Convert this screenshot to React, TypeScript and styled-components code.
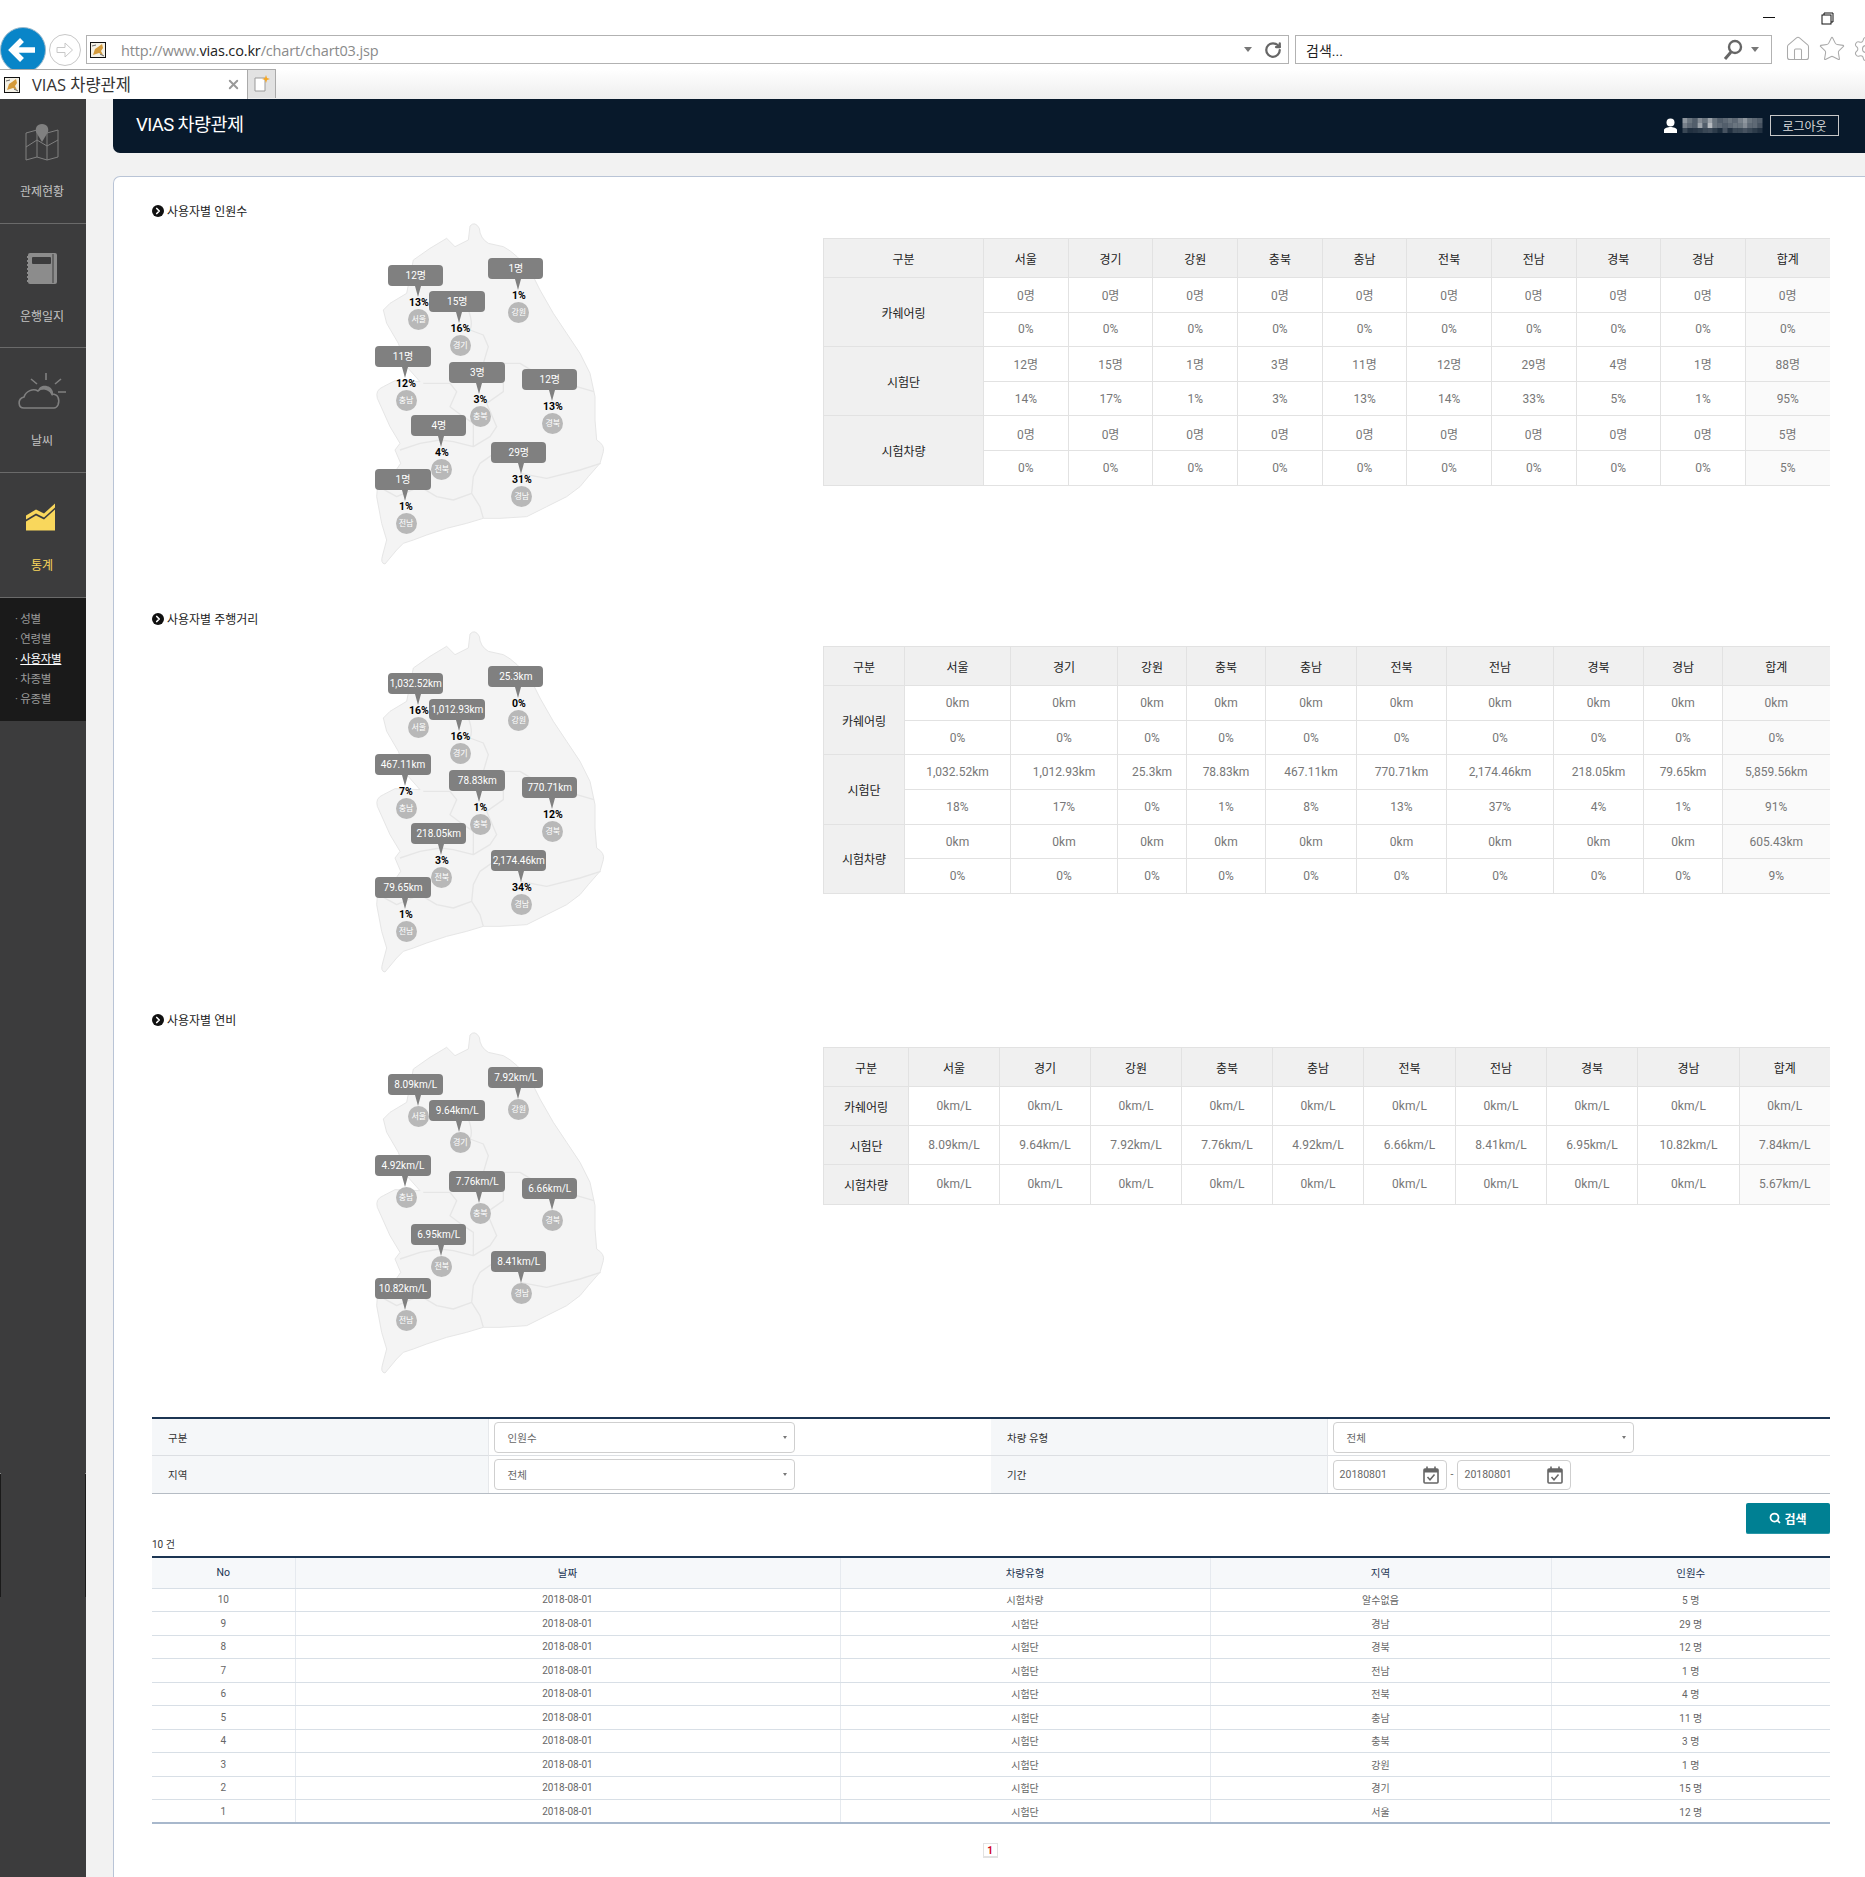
import React from "react";
import styled, { createGlobalStyle } from "styled-components";
import { ChevronRight, Home, RotateCw, Search, Settings, Star, X } from "lucide-react";

const FONT = `Roboto, "Noto Sans CJK KR", sans-serif`;

const GlobalStyle = createGlobalStyle`
  html, body { margin: 0; padding: 0; background: #fff; }
  body { font-family: ${FONT}; font-size: 12px; color: #222; overflow: hidden; }
  * { box-sizing: border-box; }
`;

const Page = styled.div`
  width: 1865px;
  height: 1877px;
  overflow: hidden;
  display: flex;
  flex-direction: column;
`;

/* ---------- browser chrome ---------- */
const TitleBar = styled.div`
  height: 35px;
  display: flex;
  justify-content: flex-end;
  align-items: flex-start;
  background: #fff;
`;
const Minimize = styled.div`
  width: 12px;
  height: 1px;
  background: #111;
  margin: 17px 46px 0 0;
`;
const Restore = styled.svg`
  width: 13px;
  height: 13px;
  margin: 12px 31px 0 0;
`;
const NavBar = styled.div`
  height: 34px;
  display: flex;
  align-items: flex-start;
  background: #fff;
`;
const BackButton = styled.div`
  width: 46px;
  height: 46px;
  margin-top: -8px;
  border-radius: 50%;
  background: #0985c8;
  border: 1px solid #9bb9cc;
  display: flex;
  align-items: center;
  justify-content: center;
  flex: none;
`;
const ForwardButton = styled.div`
  width: 32px;
  height: 32px;
  margin: -1px 5px 0 3px;
  border-radius: 50%;
  border: 1px solid #c8c8c8;
  display: flex;
  align-items: center;
  justify-content: center;
  flex: none;
`;
const AddressBox = styled.div<{ $w: number }>`
  width: ${(p) => p.$w}px;
  height: 29px;
  border: 1px solid #b2b2b2;
  display: flex;
  align-items: center;
  flex: none;
  margin-right: 6px;
  background: #fff;
`;
const Favicon = styled.svg<{ $left: number }>`
  width: 16px;
  height: 16px;
  margin-left: ${(p) => p.$left}px;
  flex: none;
`;
const UrlText = styled.div`
  margin-left: 15px;
  padding-top: 1px;
  font-family: "Open Sans", sans-serif;
  font-size: 14.5px;
  letter-spacing: -0.15px;
  color: #8a8a8a;
  flex: 1;
  b { font-weight: 400; color: #222; }
`;
const ArrowDown = styled.div`
  width: 0;
  height: 0;
  border-left: 4px solid transparent;
  border-right: 4px solid transparent;
  border-top: 5px solid #777;
  flex: none;
`;
const SearchText = styled.div`
  margin-left: 10px;
  flex: 1;
  font-size: 14px;
  color: #222;
`;
const ToolIcons = styled.div`
  display: flex;
  gap: 6px;
  margin-left: 6px;
  color: #aaa;
`;
const TabRow = styled.div`
  height: 30px;
  position: relative;
  z-index: 2;
  display: flex;
  background: linear-gradient(#fff, #eee);
`;
const ActiveTab = styled.div`
  width: 248px;
  height: 30px;
  background: #fff;
  border-top: 1px solid #aaa;
  border-right: 1px solid #aaa;
  display: flex;
  align-items: center;
  font-size: 16.5px;
  font-family: "Open Sans", "Noto Sans CJK KR", sans-serif;
  color: #333;
`;
const TabTitle = styled.div`
  margin: 0 0 2px 12px;
  flex: 1;
`;
const NewTab = styled.div`
  width: 28px;
  height: 29px;
  background: #e2e2e2;
  border-top: 1px solid #aaa;
  border-right: 1px solid #aaa;
  display: flex;
  align-items: center;
  justify-content: center;
`;

/* ---------- sidebar ---------- */
const Main = styled.div`
  flex: 1;
  display: flex;
  min-height: 0;
`;
const Sidebar = styled.nav`
  width: 86px;
  flex: none;
  background: #3c3c3d;
  position: relative;
  &::before, &::after {
    content: "";
    position: absolute;
    top: 1374px;
    width: 1px;
    height: 123px;
    background: #1a1a1a;
    border-top: 1px solid #888;
  }
  &::before { left: 0; }
  &::after { right: 0; }
`;
const SideItem = styled.div<{ $active?: boolean }>`
  height: 124.7px;
  border-bottom: 1px solid #6a6a6a;
  padding: 24px 2px 0 0;
  text-align: center;
  color: ${(p) => (p.$active ? "#f9d75c" : "#c4c4c4")};
`;
const SideIcon = styled.svg`
  display: block;
  width: 50px;
  height: 40px;
  margin: 0 auto 21px;
`;
const SideLabel = styled.div`
  line-height: 16px;
  font-size: 12px;
`;
const SubMenu = styled.ul`
  margin: 0;
  list-style: none;
  height: 123px;
  padding: 11px 0 0 15px;
  background: #1a1a1a;
`;
const SubItem = styled.li<{ $active?: boolean }>`
  line-height: 20px;
  font-size: 11.5px;
  letter-spacing: -0.3px;
  color: ${(p) => (p.$active ? "#fff" : "#9a9a9a")};
  span { text-decoration: ${(p) => (p.$active ? "underline" : "none")}; }
`;

/* ---------- content ---------- */
const Content = styled.main`
  flex: 1;
  background: #f2f2f2;
  padding-left: 27px;
  min-width: 0;
`;
const TopHeader = styled.header`
  height: 54px;
  background: #08192b;
  border-bottom-left-radius: 7px;
  color: #fff;
  display: flex;
  align-items: center;
  padding: 0 26px 2px 23px;
  margin-bottom: 23px;
`;
const HeaderTitle = styled.h1`
  margin: 0 0 4px;
  flex: 1;
  font-size: 18.5px;
  font-weight: 400;
  letter-spacing: -0.6px;
`;
const UserIcon = styled.svg`
  width: 13px;
  height: 15px;
  margin-right: 5px;
`;
const Mosaic = styled.svg`
  width: 81px;
  height: 15px;
  margin-right: 7px;
`;
const LogoutButton = styled.button`
  width: 69px;
  height: 21px;
  padding: 0;
  background: transparent;
  border: 1px solid #c8c8c8;
  color: #ddd;
  font-family: ${FONT};
  font-size: 12px;
`;
const Card = styled.div`
  background: #fff;
  border: 1px solid #b9c4d6;
  border-width: 1px 0 0 1px;
  border-top-left-radius: 7px;
  height: 1701px;
  padding: 25px 35px 0 38px;
`;
const Section = styled.section<{ $gap: number }>`
  margin-bottom: ${(p) => p.$gap}px;
`;
const SectionTitle = styled.h2`
  margin: 0 0 1px;
  height: 17px;
  display: flex;
  align-items: center;
  gap: 3px;
  font-size: 12px;
  font-weight: 400;
  color: #222;
`;
const TitleBullet = styled.span`
  width: 12px;
  height: 12px;
  border-radius: 50%;
  background: #111;
  color: #fff;
  display: flex;
  align-items: center;
  justify-content: center;
`;
const SectionBody = styled.div`
  display: flex;
  height: 350px;
`;
const MapColumn = styled.div`
  width: 671px;
  flex: none;
  padding-left: 188px;
`;
const MapBox = styled.div`
  position: relative;
  width: 290px;
  height: 350px;
`;
const MapSvg = styled.svg`
  display: block;
  width: 290px;
  height: 350px;
`;
const Pin = styled.div<{ $x: number; $y: number; $w: number }>`
  position: absolute;
  left: ${(p) => p.$x}px;
  top: ${(p) => p.$y}px;
  width: ${(p) => p.$w}px;
  display: flex;
  flex-direction: column;
  align-items: center;
`;
const Bubble = styled.div`
  width: 100%;
  height: 21px;
  line-height: 21px;
  border-radius: 4px;
  background: #808080;
  color: #fff;
  font-size: 10px;
  text-align: center;
  white-space: nowrap;
`;
const PinTip = styled.div`
  width: 0;
  height: 0;
  margin-left: 4px;
  border-left: 3px solid transparent;
  border-right: 3px solid transparent;
  border-top: 11px solid #808080;
`;
const PinPercent = styled.div`
  height: 12px;
  line-height: 12px;
  margin-left: 6px;
  font-size: 10.5px;
  font-weight: 700;
  color: #000;
`;
const RegionDot = styled.div`
  width: 21px;
  height: 21px;
  margin-left: 6px;
  border-radius: 50%;
  background: #b8b8b8;
  color: #fff;
  font-size: 8px;
  line-height: 21px;
  text-align: center;
`;
const TableColumn = styled.div<{ $top: number }>`
  flex: 1;
  padding-top: ${(p) => p.$top}px;
`;
const DataTable = styled.table`
  width: 1006px;
  table-layout: fixed;
  border-collapse: collapse;
  font-size: 12px;
  text-align: center;
  th, td { border: 1px solid #e2e2e2; padding: 0; }
  th { background: #f0f0f0; font-weight: 400; color: #222; }
  td { color: #777; }
  tr > :last-child { border-right: 0; }
`;
const HeadRow = styled.tr`
  height: 39px;
`;
const BodyRow = styled.tr<{ $h: number }>`
  height: ${(p) => p.$h}px;
`;
const TotalCell = styled.td`
  background: #fafafa;
`;

/* ---------- filter + list ---------- */
const FilterGrid = styled.div`
  display: grid;
  grid-template-columns: 20% 30% 20% 30%;
  grid-template-rows: 37px 37px;
  margin-top: 38px;
  border-top: 2px solid #1c3553;
  border-bottom: 1px solid #b5bcc4;
`;
const FilterLabel = styled.div<{ $last?: boolean }>`
  background: #f5f7f9;
  padding-left: 16px;
  display: flex;
  align-items: center;
  font-size: 10.5px;
  color: #333;
  border-bottom: ${(p) => (p.$last ? "0" : "1px solid #dcdfe3")};
`;
const FilterField = styled.div<{ $last?: boolean }>`
  padding-left: 5px;
  display: flex;
  align-items: center;
  gap: 4px;
  font-size: 10.5px;
  color: #666;
  border-left: 1px solid #e6e8eb;
  border-bottom: ${(p) => (p.$last ? "0" : "1px solid #dcdfe3")};
`;
const SelectBox = styled.div`
  width: 301px;
  height: 31px;
  border: 1px solid #cfcfcf;
  border-radius: 4px;
  padding: 0 7px 0 13px;
  display: flex;
  align-items: center;
  justify-content: space-between;
`;
const SelectArrow = styled.div`
  width: 0;
  height: 0;
  border-left: 2.5px solid transparent;
  border-right: 2.5px solid transparent;
  border-top: 3px solid #777;
`;
const DateBox = styled.div`
  width: 114px;
  height: 30px;
  border: 1px solid #cfcfcf;
  border-radius: 4px;
  padding: 0 7px 0 6px;
  display: flex;
  align-items: center;
  justify-content: space-between;
`;
const CalendarIcon = styled.svg`
  width: 16px;
  height: 18px;
`;
const ButtonRow = styled.div`
  display: flex;
  justify-content: flex-end;
  margin-top: 9px;
`;
const SearchButton = styled.button`
  width: 84px;
  height: 31px;
  padding: 0;
  border: 0;
  border-bottom: 1px solid #2a97a8;
  border-radius: 2px;
  background: #008093;
  color: #fff;
  font-family: ${FONT};
  font-size: 12px;
  font-weight: 700;
  display: flex;
  align-items: center;
  justify-content: center;
  gap: 3px;
`;
const CountText = styled.div`
  height: 22px;
  line-height: 22px;
  font-size: 10px;
  color: #333;
`;
const ListTable = styled.table`
  width: 1678px;
  table-layout: fixed;
  border-collapse: collapse;
  border-top: 2px solid #1c3553;
  border-bottom: 2px solid #a8b8cc;
  text-align: center;
  th, td { padding: 0; border-left: 1px solid #e6eaef; }
  tr > :first-child { border-left: 0; }
  th {
    height: 31px;
    background: #f6f8fa;
    font-size: 10.5px;
    font-weight: 400;
    color: #1c3553;
    border-bottom: 1px solid #d8dfe6;
  }
  td {
    height: 23.5px;
    font-size: 10px;
    color: #666;
    border-bottom: 1px solid #d8dfe6;
  }
`;
const Pagination = styled.div`
  display: flex;
  justify-content: center;
  margin: 19px 0 0 -2px;
`;
const PageNumber = styled.span`
  width: 15px;
  height: 15px;
  line-height: 13px;
  border: 1px solid #e2e2e2;
  border-bottom-width: 2px;
  font-size: 10px;
  font-weight: 700;
  color: #d0021b;
  text-align: center;
`;

/* ---------- data ---------- */
const REGIONS = ["서울", "경기", "강원", "충북", "충남", "전북", "전남", "경북", "경남"];
const HEADERS = ["구분", ...REGIONS, "합계"];

const PIN_PLACES = [
  { name: "서울", x: 48.3, y: 45, w: 55 },
  { name: "경기", x: 89.3, y: 71, w: 56 },
  { name: "강원", x: 148.3, y: 38, w: 55 },
  { name: "충남", x: 35, y: 126, w: 56 },
  { name: "충북", x: 109.3, y: 142, w: 56 },
  { name: "경북", x: 182.3, y: 149, w: 55 },
  { name: "전북", x: 71.3, y: 195, w: 55 },
  { name: "경남", x: 151.3, y: 222, w: 55 },
  { name: "전남", x: 35, y: 249, w: 56 },
];

const repeat = (v: string, last = v) => [...Array(9).fill(v), last];

type Group = { label: string; rows: string[][] };

const PEOPLE: Group[] = [
  { label: "카쉐어링", rows: [repeat("0명"), repeat("0%")] },
  {
    label: "시험단",
    rows: [
      ["12명", "15명", "1명", "3명", "11명", "12명", "29명", "4명", "1명", "88명"],
      ["14%", "17%", "1%", "3%", "13%", "14%", "33%", "5%", "1%", "95%"],
    ],
  },
  { label: "시험차량", rows: [repeat("0명", "5명"), repeat("0%", "5%")] },
];
const DISTANCE: Group[] = [
  { label: "카쉐어링", rows: [repeat("0km"), repeat("0%")] },
  {
    label: "시험단",
    rows: [
      ["1,032.52km", "1,012.93km", "25.3km", "78.83km", "467.11km", "770.71km", "2,174.46km", "218.05km", "79.65km", "5,859.56km"],
      ["18%", "17%", "0%", "1%", "8%", "13%", "37%", "4%", "1%", "91%"],
    ],
  },
  { label: "시험차량", rows: [repeat("0km", "605.43km"), repeat("0%", "9%")] },
];
const FUEL: Group[] = [
  { label: "카쉐어링", rows: [repeat("0km/L")] },
  {
    label: "시험단",
    rows: [["8.09km/L", "9.64km/L", "7.92km/L", "7.76km/L", "4.92km/L", "6.66km/L", "8.41km/L", "6.95km/L", "10.82km/L", "7.84km/L"]],
  },
  { label: "시험차량", rows: [repeat("0km/L", "5.67km/L")] },
];

// values follow PIN_PLACES order
const MAP_PEOPLE = [["12명", "13%"], ["15명", "16%"], ["1명", "1%"], ["11명", "12%"], ["3명", "3%"], ["12명", "13%"], ["4명", "4%"], ["29명", "31%"], ["1명", "1%"]];
const MAP_DISTANCE = [["1,032.52km", "16%"], ["1,012.93km", "16%"], ["25.3km", "0%"], ["467.11km", "7%"], ["78.83km", "1%"], ["770.71km", "12%"], ["218.05km", "3%"], ["2,174.46km", "34%"], ["79.65km", "1%"]];
const MAP_FUEL = [["8.09km/L"], ["9.64km/L"], ["7.92km/L"], ["4.92km/L"], ["7.76km/L"], ["6.66km/L"], ["6.95km/L"], ["8.41km/L"], ["10.82km/L"]];

const LIST = [
  ["10", "시험차량", "알수없음", "5 명"],
  ["9", "시험단", "경남", "29 명"],
  ["8", "시험단", "경북", "12 명"],
  ["7", "시험단", "전남", "1 명"],
  ["6", "시험단", "전북", "4 명"],
  ["5", "시험단", "충남", "11 명"],
  ["4", "시험단", "충북", "3 명"],
  ["3", "시험단", "강원", "1 명"],
  ["2", "시험단", "경기", "15 명"],
  ["1", "시험단", "서울", "12 명"],
];

const MOSAIC_ROWS = [
  [0.55, 0.4, 0.3, 0.5, 0.4, 0.6, 0.4, 0.3, 0.35, 0.4, 0.35, 0.45, 0.55, 0.4, 0.35, 0.3],
  [0.45, 0.35, 0.3, 0.6, 0.3, 0.7, 0.4, 0.35, 0.3, 0.35, 0.4, 0.4, 0.5, 0.35, 0.35, 0.25],
  [0.2, 0.1, 0.12, 0.15, 0.2, 0.22, 0.15, 0.08, 0.25, 0.1, 0.2, 0.2, 0.25, 0.2, 0.15, 0.1],
];

/* ---------- drawings ---------- */
const FaviconArt = ({ left }: { left: number }) => (
  <Favicon $left={left} viewBox="0 0 16 16">
    <rect x="0.5" y="0.5" width="15" height="15" fill="#f4f1e6" stroke="#111" />
    <path d="M3 13 L5 7 L8 5 L12 2 L13 6 L11 9 L13 13 L9 11 Z" fill="#d49a3a" />
    <path d="M2 4 L6 3 M10 12 L14 14" stroke="#666" strokeWidth="1" />
  </Favicon>
);

const KoreaMap = () => (
  <MapSvg viewBox="0 30 870 1050">
    <path
      d="M390 48 Q405 32 418 55 Q420 85 445 100 L490 110 Q530 130 575 190 L600 240 L640 310 L680 370 L720 430 L750 490 L765 560 L765 630 L770 690 Q795 705 790 725 L780 760 L745 800 L720 830 L680 860 L620 890 L560 920 L480 925 L430 925 L380 940 L320 955 L260 975 L220 990 L190 1000 L170 1020 L135 1062 Q120 1060 128 1035 L140 990 L125 940 L110 860 L115 800 L165 785 L182 760 L165 720 L180 700 L150 650 L112 565 Q105 540 130 530 L165 512 L240 515 L200 470 L175 400 L140 340 L130 300 L150 280 L200 250 L210 200 L220 150 L270 115 L320 85 L345 110 L385 90 Z"
      fill="#f4f4f4"
      stroke="#e6e6e6"
      strokeWidth="3"
      strokeLinejoin="round"
    />
    <path
      d="M385 300 Q400 340 390 360 L430 375 L445 410 L430 460 L490 460 L540 460 L590 490 M640 530 L710 530 L762 545 M490 460 L490 545 L440 580 L470 650 L450 680 L400 710 L340 695 L300 690 L240 700 L180 720 M250 520 L330 520 L350 545 L330 590 L370 620 L400 640 L400 710 M420 760 L400 800 L395 850 L420 890 L430 925 M470 725 L420 760 M540 790 L620 805 L720 780 L782 760 M125 835 L170 860 L240 830 L290 860 L340 870 L395 850"
      fill="none"
      stroke="#e6e6e6"
      strokeWidth="4"
      strokeLinejoin="round"
    />
  </MapSvg>
);

const RegionMap = ({ values }: { values: string[][] }) => (
  <MapBox>
    <KoreaMap />
    {PIN_PLACES.map((place, i) => (
      <Pin key={place.name} $x={place.x} $y={place.y} $w={place.w}>
        <Bubble>{values[i][0]}</Bubble>
        <PinTip />
        {values[i][1] && <PinPercent>{values[i][1]}</PinPercent>}
        <RegionDot>{place.name}</RegionDot>
      </Pin>
    ))}
  </MapBox>
);

const StatTable = ({ groups, widths, rowH }: { groups: Group[]; widths: number[]; rowH: number }) => (
  <DataTable>
    <colgroup>
      {widths.map((w, i) => (
        <col key={i} width={w} />
      ))}
    </colgroup>
    <thead>
      <HeadRow>
        {HEADERS.map((h) => (
          <th key={h}>{h}</th>
        ))}
      </HeadRow>
    </thead>
    <tbody>
      {groups.map((group) =>
        group.rows.map((row, r) => (
          <BodyRow key={group.label + r} $h={rowH}>
            {r === 0 && <th rowSpan={group.rows.length}>{group.label}</th>}
            {row.map((cell, c) =>
              c === row.length - 1 ? <TotalCell key={c}>{cell}</TotalCell> : <td key={c}>{cell}</td>
            )}
          </BodyRow>
        ))
      )}
    </tbody>
  </DataTable>
);

const Calendar = () => (
  <CalendarIcon viewBox="0 0 16 18">
    <rect x="1" y="3" width="14" height="14" rx="1" fill="#fff" stroke="#666" strokeWidth="1.6" />
    <rect x="1" y="3" width="14" height="3.5" fill="#666" />
    <path d="M4 0.5 V4 M12 0.5 V4" stroke="#666" strokeWidth="1.6" />
    <path d="M4.5 11 L7 13.8 L11.5 8.5" fill="none" stroke="#666" strokeWidth="1.5" />
  </CalendarIcon>
);

const SECTIONS = [
  { title: "사용자별 인원수", map: MAP_PEOPLE, groups: PEOPLE, rowH: 34.6, top: 18, gap: 40,
    widths: [160, 84.7, 84.7, 84.7, 84.7, 84.6, 84.6, 84.6, 84.6, 84.6, 84.6] },
  { title: "사용자별 주행거리", map: MAP_DISTANCE, groups: DISTANCE, rowH: 34.7, top: 18, gap: 33,
    widths: [81, 106, 107, 69, 79, 91, 90, 107, 90, 79, 107] },
  { title: "사용자별 연비", map: MAP_FUEL, groups: FUEL, rowH: 39.2, top: 18, gap: 0,
    widths: [85, 91, 91, 91, 91, 91, 92, 91, 91, 102, 90] },
];

export default function App() {
  return (
    <Page>
      <GlobalStyle />
      <TitleBar>
        <Minimize />
        <Restore viewBox="0 0 13 13">
          <path d="M3 3 V1 H12 V10 H10" fill="none" stroke="#111" />
          <rect x="1" y="3" width="9" height="9" fill="#fff" stroke="#111" />
        </Restore>
      </TitleBar>
      <NavBar>
        <BackButton>
          <svg width="30" height="26" viewBox="0 0 30 26">
            <path d="M14 3 L4 13 L14 23 M5 13 H27" fill="none" stroke="#fff" strokeWidth="5.5" />
          </svg>
        </BackButton>
        <ForwardButton>
          <svg width="18" height="18" viewBox="0 0 18 18">
            <path d="M1 6.5 H9 V2 L16.5 9 L9 16 V11.5 H1 Z" fill="none" stroke="#c8c8c8" />
          </svg>
        </ForwardButton>
        <AddressBox $w={1203}>
          <FaviconArt left={3} />
          <UrlText>
            http://www.<b>vias.co.kr</b>/chart/chart03.jsp
          </UrlText>
          <ArrowDown />
          <RotateCw size={18} strokeWidth={3} color="#666" style={{ margin: "0 6px 0 12px" }} />
        </AddressBox>
        <AddressBox $w={477}>
          <SearchText>검색...</SearchText>
          <svg width="20" height="22" viewBox="0 0 20 22" style={{ marginRight: 8 }}>
            <circle cx="12" cy="8" r="6" fill="none" stroke="#666" strokeWidth="2.4" />
            <path d="M8 13 L2 20" stroke="#666" strokeWidth="3" />
          </svg>
          <ArrowDown style={{ marginRight: 12 }} />
        </AddressBox>
        <ToolIcons>
          <Home size={28} strokeWidth={0.9} />
          <Star size={28} strokeWidth={0.9} />
          <Settings size={28} strokeWidth={0.9} />
        </ToolIcons>
      </NavBar>
      <TabRow>
        <ActiveTab>
          <FaviconArt left={4} />
          <TabTitle>VIAS 차량관제</TabTitle>
          <X size={15} strokeWidth={3} color="#999" style={{ marginRight: 6 }} />
        </ActiveTab>
        <NewTab>
          <svg width="16" height="18" viewBox="0 0 16 18">
            <path d="M1 3 H11 V16 H1 Z" fill="#fff" stroke="#999" />
            <path d="M12 0 L13 3 L16 4 L13 5 L12 8 L11 5 L8 4 L11 3 Z" fill="#f5a623" />
          </svg>
        </NewTab>
      </TabRow>

      <Main>
        <Sidebar>
          <SideItem>
            <SideIcon viewBox="0 0 50 40">
              <path d="M9 10 L20 7 L30 10 L41 7 V34 L30 37 L20 34 L9 37 Z M20 7 V34 M30 10 V37 M9 24 L20 17 L30 23 L41 17" fill="none" stroke="#808080" strokeWidth="1" />
              <path d="M25 1 C30 1 32 5 31 9 L25 19 L19 9 C18 5 20 1 25 1 Z" fill="#808080" />
            </SideIcon>
            <SideLabel>관제현황</SideLabel>
          </SideItem>
          <SideItem>
            <SideIcon viewBox="0 0 50 40">
              <rect x="11" y="5" width="29" height="31" rx="2" fill="#8c8c8c" />
              <rect x="15" y="9" width="19" height="7" rx="1" fill="#3c3c3d" />
              <path d="M36 6 V35" stroke="#3c3c3d" strokeWidth="1" />
              <path d="M10 9 H13 M10 13 H13 M10 17 H13 M10 21 H13 M10 25 H13 M10 29 H13 M10 33 H13" stroke="#8c8c8c" strokeWidth="2" />
            </SideIcon>
            <SideLabel>운행일지</SideLabel>
          </SideItem>
          <SideItem>
            <SideIcon viewBox="0 0 50 40">
              <path d="M7 36 C1 36 0 27 7 25 C9 19 16 16 21 19 C25 15 33 16 35 22 C41 22 43 27 41 33 C40 35 39 36 37 36 Z" fill="none" stroke="#808080" strokeWidth="1.6" />
              <path d="M21 19 C22 12 34 12 36 20 C36 23 36 23 35 24 C33 18 26 16 21 19 Z" fill="#808080" />
              <path d="M29 1 V8 M14 7 L20 12 M44 7 L38 12 M41 20 H49" stroke="#808080" strokeWidth="1.6" />
            </SideIcon>
            <SideLabel>날씨</SideLabel>
          </SideItem>
          <SideItem $active>
            <SideIcon viewBox="0 0 50 40">
              <path d="M9 18.5 L19 12.5 L27 16.5 L38 6.5 V10.5 L27 20.5 L19 16.5 L9 22.5 Z" fill="#f9d75c" />
              <path d="M9 24.5 L19 18.5 L27 22.5 L38 12.5 V33.5 H9 Z" fill="#f9d75c" />
            </SideIcon>
            <SideLabel>통계</SideLabel>
          </SideItem>
          <SubMenu>
            <SubItem>· 성별</SubItem>
            <SubItem>· 연령별</SubItem>
            <SubItem $active>· <span>사용자별</span></SubItem>
            <SubItem>· 차종별</SubItem>
            <SubItem>· 유종별</SubItem>
          </SubMenu>
        </Sidebar>

        <Content>
          <TopHeader>
            <HeaderTitle>VIAS 차량관제</HeaderTitle>
            <UserIcon viewBox="0 0 13 15">
              <circle cx="6.5" cy="4.5" r="4" fill="#fff" />
              <path d="M0 15 V12 C0 10 4 9 6.5 9 C9 9 13 10 13 12 V15 Z" fill="#fff" />
            </UserIcon>
            <Mosaic viewBox="0 0 80 15">
              {MOSAIC_ROWS.map((row, y) =>
                row.map((o, x) => <rect key={`${x}-${y}`} x={x * 5} y={y * 5} width="5" height="5" fill="#fff" opacity={o} />)
              )}
            </Mosaic>
            <LogoutButton>로그아웃</LogoutButton>
          </TopHeader>

          <Card>
            {SECTIONS.map((s) => (
              <Section key={s.title} $gap={s.gap}>
                <SectionTitle>
                  <TitleBullet>
                    <ChevronRight size={10} strokeWidth={4} />
                  </TitleBullet>
                  {s.title}
                </SectionTitle>
                <SectionBody>
                  <MapColumn>
                    <RegionMap values={s.map} />
                  </MapColumn>
                  <TableColumn $top={s.top}>
                    <StatTable groups={s.groups} widths={s.widths} rowH={s.rowH} />
                  </TableColumn>
                </SectionBody>
              </Section>
            ))}

            <FilterGrid>
              <FilterLabel>구분</FilterLabel>
              <FilterField>
                <SelectBox>인원수<SelectArrow /></SelectBox>
              </FilterField>
              <FilterLabel>차량 유형</FilterLabel>
              <FilterField>
                <SelectBox>전체<SelectArrow /></SelectBox>
              </FilterField>
              <FilterLabel $last>지역</FilterLabel>
              <FilterField $last>
                <SelectBox>전체<SelectArrow /></SelectBox>
              </FilterField>
              <FilterLabel $last>기간</FilterLabel>
              <FilterField $last>
                <DateBox>20180801<Calendar /></DateBox>
                -
                <DateBox>20180801<Calendar /></DateBox>
              </FilterField>
            </FilterGrid>

            <ButtonRow>
              <SearchButton>
                <Search size={12} strokeWidth={3.5} />
                검색
              </SearchButton>
            </ButtonRow>

            <CountText>10 건</CountText>
            <ListTable>
              <colgroup>
                <col width={143} />
                <col width={545} />
                <col width={370} />
                <col width={341} />
                <col width={279} />
              </colgroup>
              <thead>
                <tr>
                  <th>No</th>
                  <th>날짜</th>
                  <th>차량유형</th>
                  <th>지역</th>
                  <th>인원수</th>
                </tr>
              </thead>
              <tbody>
                {LIST.map((row) => (
                  <tr key={row[0]}>
                    <td>{row[0]}</td>
                    <td>2018-08-01</td>
                    <td>{row[1]}</td>
                    <td>{row[2]}</td>
                    <td>{row[3]}</td>
                  </tr>
                ))}
              </tbody>
            </ListTable>
            <Pagination>
              <PageNumber>1</PageNumber>
            </Pagination>
          </Card>
        </Content>
      </Main>
    </Page>
  );
}
